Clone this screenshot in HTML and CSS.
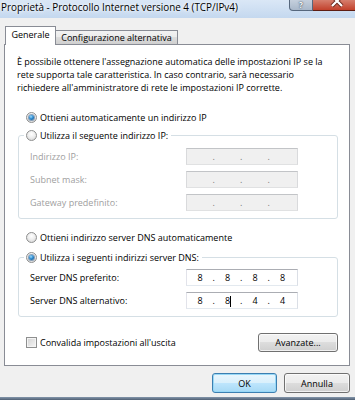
FILE: index.html
```html
<!DOCTYPE html>
<html lang="it">
<head>
    <meta charset="UTF-8">
    <title>Proprietà - Protocollo Internet versione 4 (TCP/IPv4)</title>
    <link rel="stylesheet" href="styles.css">
</head>
<body>

<div class="window">
    <div class="titlebar">
        <span class="title">Proprietà - Protocollo Internet versione 4 (TCP/IPv4)</span>
        <div class="caption-buttons">
            <span class="cap-btn help"><span>?</span></span>
            <span class="cap-btn close">
                <svg width="42" height="10" viewBox="0 0 42 10">
                    <path d="M19 -4 L29 6 M29 -4 L19 6" stroke="#6b2a1f" stroke-width="4"/>
                    <path d="M19 -4 L29 6 M29 -4 L19 6" stroke="#fff" stroke-width="2.2"/>
                </svg>
            </span>
        </div>
    </div>

    <div class="client">
        <div class="tabs">
            <div class="tab active">Generale</div>
            <div class="tab">Configurazione alternativa</div>
        </div>

        <div class="panel">
            <p class="intro">È possibile ottenere l'assegnazione automatica delle impostazioni IP se la<br>rete supporta tale caratteristica. In caso contrario, sarà necessario<br>richiedere all'amministratore di rete le impostazioni IP corrette.</p>

            <label class="option top-option"><span class="radio checked"></span>Ottieni automaticamente un indirizzo IP</label>

            <fieldset class="group">
                <legend><label class="option"><span class="radio"></span>Utilizza il seguente indirizzo IP:</label></legend>
                <div class="field disabled">
                    <span class="field-label">Indirizzo IP:</span>
                    <div class="ip-box"><span class="seg"></span><span class="dot">.</span><span class="seg"></span><span class="dot">.</span><span class="seg"></span><span class="dot">.</span><span class="seg"></span></div>
                </div>
                <div class="field disabled">
                    <span class="field-label">Subnet mask:</span>
                    <div class="ip-box"><span class="seg"></span><span class="dot">.</span><span class="seg"></span><span class="dot">.</span><span class="seg"></span><span class="dot">.</span><span class="seg"></span></div>
                </div>
                <div class="field disabled">
                    <span class="field-label">Gateway predefinito:</span>
                    <div class="ip-box"><span class="seg"></span><span class="dot">.</span><span class="seg"></span><span class="dot">.</span><span class="seg"></span><span class="dot">.</span><span class="seg"></span></div>
                </div>
            </fieldset>

            <label class="option dns-option"><span class="radio"></span>Ottieni indirizzo server DNS automaticamente</label>

            <fieldset class="group dns-group">
                <legend><label class="option"><span class="radio checked"></span>Utilizza i seguenti indirizzi server DNS:</label></legend>
                <div class="field">
                    <span class="field-label">Server DNS preferito:</span>
                    <div class="ip-box"><span class="seg">8</span><span class="dot">.</span><span class="seg">8</span><span class="dot">.</span><span class="seg">8</span><span class="dot">.</span><span class="seg">8</span></div>
                </div>
                <div class="field">
                    <span class="field-label">Server DNS alternativo:</span>
                    <div class="ip-box"><span class="seg">8</span><span class="dot">.</span><span class="seg">8<span class="caret"></span></span><span class="dot">.</span><span class="seg">4</span><span class="dot">.</span><span class="seg">4</span></div>
                </div>
            </fieldset>

            <div class="panel-footer">
                <label class="option"><span class="checkbox"></span>Convalida impostazioni all'uscita</label>
                <button class="btn advanced">Avanzate...</button>
            </div>
        </div>

        <div class="dialog-buttons">
            <button class="btn default ok">OK</button>
            <button class="btn cancel">Annulla</button>
        </div>
    </div>

    <div class="frame-bottom"></div>
</div>

</body>
</html>
```

FILE: styles.css
```css
body {
    margin: 0;
    background-color: #f0f0f0;
    font-family: "Open Sans", "Noto Sans", sans-serif;
    font-size: 9px;
    color: #000;
}

.window {
    width: 355px;
    height: 400px;
    display: flex;
    flex-direction: column;
    overflow: hidden;
}

/* barra del titolo */
.titlebar {
    height: 18px;
    flex: none;
    display: flex;
    align-items: flex-start;
    background: linear-gradient(#dae7f6, #c4d8ef);
}

.title {
    padding-left: 1px;
    line-height: 14px;
    font-size: 9.9px;
    white-space: nowrap;
    text-shadow: 0 0 5px #fff, 0 0 3px #fff;
}

.caption-buttons {
    margin-left: auto;
    display: flex;
}

.cap-btn {
    height: 11px;
    box-sizing: border-box;
    overflow: hidden;
    display: block;
}

.help {
    width: 24px;
    border: 1px solid #56677d;
    border-top: none;
    border-radius: 0 0 0 4px;
    background: linear-gradient(#c5d0dd, #a9b8ca);
}

.help span {
    display: block;
    line-height: 10px;
    font-size: 8px;
    font-weight: bold;
    text-align: center;
    color: #fff;
    text-shadow: 0 0 2px #3b4a5c, 0 0 1px #3b4a5c;
}

.close {
    width: 42px;
    border-bottom: 1px solid #5e1d12;
    background: linear-gradient(#d67e6d, #c2412c);
}

.close svg {
    display: block;
}

.client {
    flex: 1;
    padding-top: 8px;
}

/* schede */
.tabs {
    display: flex;
    align-items: flex-end;
    padding-left: 5px;
}

.tab {
    box-sizing: border-box;
    border: 1px solid #898c95;
    border-bottom: none;
    text-align: center;
    white-space: nowrap;
}

.tab.active {
    position: relative;
    z-index: 1;
    width: 51px;
    height: 19px;
    margin-bottom: -1px;
    line-height: 16px;
    background-color: #fff;
}

.tab:not(.active) {
    width: 122px;
    height: 14px;
    line-height: 13px;
    border-left: none;
    background: linear-gradient(#f2f2f2, #ebebeb 50%, #dddddd 50%, #cfcfcf);
}

.panel {
    margin: 0 5px 0 4px;
    padding-bottom: 13px;
    border: 1px solid #898c95;
    background-color: #fff;
}

.intro {
    margin: 0;
    padding: 10px 12px 0;
    line-height: 13px;
    white-space: nowrap;
}

/* radio e checkbox */
.option {
    display: flex;
    align-items: center;
    gap: 3px;
    height: 14px;
    white-space: nowrap;
}

.top-option {
    margin-top: 16px;
    padding-left: 21px;
}

.dns-option {
    margin-top: 11px;
    padding-left: 21px;
}

.radio {
    flex: none;
    width: 11px;
    height: 11px;
    box-sizing: border-box;
    border: 1px solid #8e8f8f;
    border-radius: 50%;
    background: radial-gradient(circle at 50% 35%, #ffffff, #eeeeee 45%, #cfcfcf);
    display: flex;
    align-items: center;
    justify-content: center;
}

.radio.checked::after {
    content: "";
    width: 5px;
    height: 5px;
    border-radius: 50%;
    background: radial-gradient(circle at 40% 35%, #9fdcfb, #2b8ad0 45%, #0e4a80);
    box-shadow: 0 0 0 1px rgba(30, 80, 130, 0.5);
}

.checkbox {
    flex: none;
    width: 11px;
    height: 11px;
    box-sizing: border-box;
    border: 1px solid #8e8f8f;
    background: linear-gradient(135deg, #d2d2d2, #f6f6f6);
    box-shadow: inset 0 0 0 1px #f4f4f4;
}

/* riquadri */
.group {
    margin: 4px 11px 0 13px;
    padding: 6px 10px 7px 11px;
    min-width: 0;
    border: 1px solid #d5dfe5;
    border-radius: 3px;
}

.group legend {
    margin-left: -6px;
    padding: 0 3px 0 2px;
}

.dns-group {
    margin-top: 6px;
    padding-top: 5px;
}

.field {
    display: flex;
    align-items: center;
    height: 17px;
}

.field + .field {
    margin-top: 6px;
}

.field-label {
    width: 156px;
    white-space: nowrap;
}

.field.disabled .field-label {
    color: #a0a0a0;
}

.ip-box {
    width: 112px;
    height: 17px;
    box-sizing: border-box;
    display: flex;
    align-items: center;
    padding-left: 1px;
    border: 1px solid;
    border-color: #abadb3 #dbdfe6 #e3e9ef #e2e3ea;
    background-color: #fff;
}

.field.disabled .ip-box {
    border-color: #c2c4c7 #d9dadc #e0e1e2 #d9dadc;
    background-color: #f0f0f0;
    color: #7a7a7a;
}

.seg {
    width: 24px;
    text-align: center;
}

.dot {
    width: 3.5px;
    text-align: center;
}

.caret {
    display: inline-block;
    width: 1px;
    height: 11px;
    margin-right: -1px;
    vertical-align: middle;
    background-color: #000;
}

.panel-footer {
    display: flex;
    align-items: center;
    justify-content: space-between;
    margin-top: 16px;
    padding: 0 11px 0 21px;
}

/* pulsanti */
.btn {
    height: 19px;
    padding: 0;
    border: 1px solid #707070;
    border-radius: 3px;
    font-family: inherit;
    font-size: 9px;
    color: #000;
    background: linear-gradient(#f2f2f2, #ebebeb 50%, #dddddd 50%, #cfcfcf);
    box-shadow: inset 0 0 0 1px rgba(255, 255, 255, 0.7);
}

.advanced {
    width: 80px;
}

.dialog-buttons {
    display: flex;
    justify-content: flex-end;
    gap: 7px;
    margin-top: 7px;
    padding-right: 5px;
}

.dialog-buttons .btn {
    height: 20px;
}

.ok {
    width: 65px;
}

.cancel {
    width: 66px;
}

.btn.default {
    border-color: #3c7fb1;
    background: linear-gradient(#eaf6fd, #d9f0fc 50%, #bee6fd 50%, #a7d9f5);
    box-shadow: inset 0 0 0 1px #98d8f6;
}

.frame-bottom {
    height: 3px;
    flex: none;
    background: linear-gradient(#8496ab, #4f5f73);
}
```
